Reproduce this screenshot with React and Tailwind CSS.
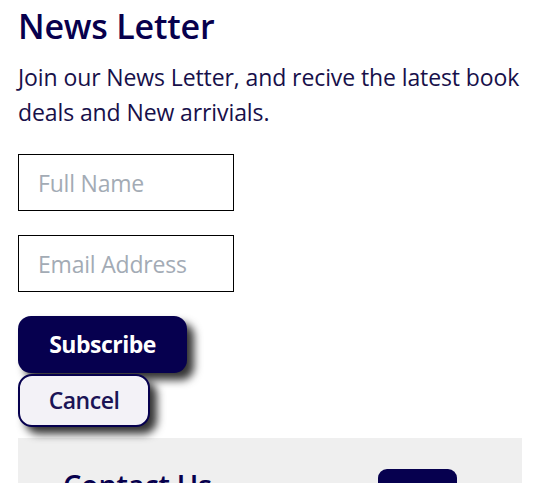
import React from 'react';

export default function App() {
  return (
    <div className="w-[538px] h-[483px] overflow-hidden bg-white px-[18px] pt-[2px] font-['Open_Sans',sans-serif]">
      <h2 className="text-[34px] leading-[48px] font-semibold text-[#07004d] tracking-[-0.2px]">News Letter</h2>
      <p className="mt-[10px] text-[23px] leading-[35px] text-[#17104a] w-[510px] tracking-[-0.1px]">
        Join our News Letter, and recive the latest book deals and New arrivials.
      </p>

      <form className="mt-[24px] flex flex-col items-start">
        <input
          type="text"
          placeholder="Full Name"
          className="w-[216px] h-[57px] border border-black px-[19px] text-[23px] tracking-[-0.2px] outline-none placeholder:text-[#a3abb5]"
        />
        <input
          type="email"
          placeholder="Email Address"
          className="mt-[24px] w-[216px] h-[57px] border border-black px-[19px] text-[23px] tracking-[-0.2px] outline-none placeholder:text-[#a3abb5]"
        />
        <button
          type="button"
          className="mt-[24px] w-[169px] h-[57px] rounded-[13px] bg-[#06004f] text-white text-[23px] font-bold tracking-[-0.5px] shadow-[7px_7px_9px_rgba(0,0,0,0.8)]"
        >
          Subscribe
        </button>
        <button
          type="button"
          className="mt-[1px] w-[132px] h-[53px] rounded-[14px] border-2 border-[#06004f] bg-[#f3f2f7] text-[#1a1456] text-[23px] font-semibold tracking-[-0.5px] shadow-[7px_7px_9px_rgba(0,0,0,0.8)]"
        >
          Cancel
        </button>
      </form>

      <section className="mt-[11px] w-[504px] h-[120px] bg-[#efefef] flex items-start justify-between pl-[45px] pr-[65px] pt-[25px]">
        <h3 className="text-[29px] font-semibold text-[#07004d] tracking-[-0.3px]">Contact Us</h3>
        <button type="button" className="mt-[6px] w-[79px] h-[46px] rounded-[9px] bg-[#06004f]"></button>
      </section>
    </div>
  );
}
